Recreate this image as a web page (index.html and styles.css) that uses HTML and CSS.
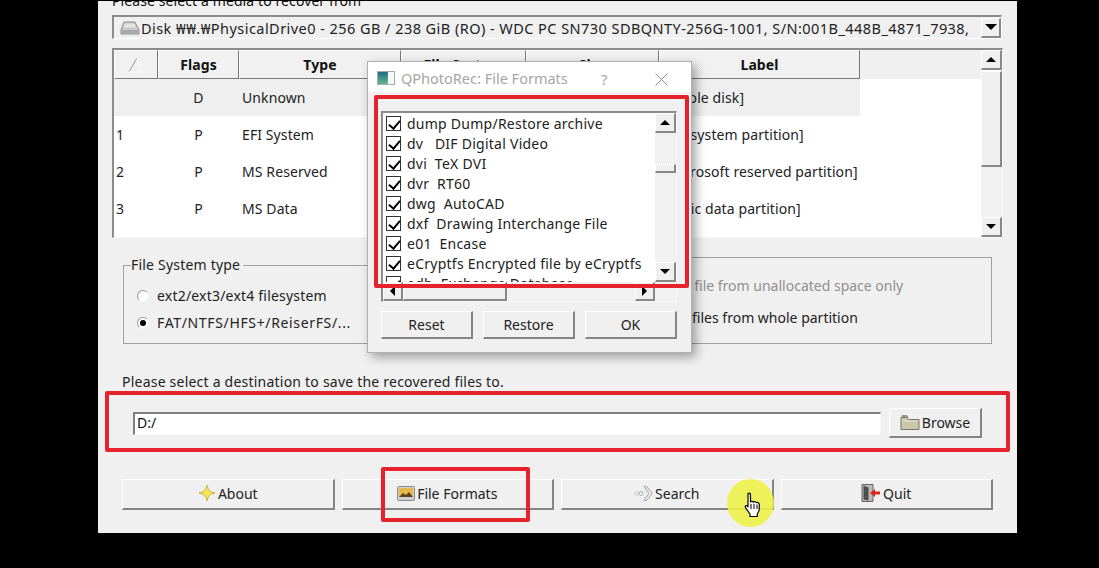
FILE: index.html
```html
<!DOCTYPE html>
<html lang="en">
<head>
<meta charset="utf-8">
<title>QPhotoRec</title>
<link rel="stylesheet" href="styles.css">
</head>
<body>
<main class="window">
  <div class="media-label">Please select a media to recover from</div>
  <div class="combo">
    <svg class="disk" width="20" height="16" viewBox="0 0 20 16"><path d="M4 2h11l4 8v4H1v-4z" fill="#c9c9c9" stroke="#8c8c8c"/><path d="M1.500 10h17v3.500h-17z" fill="#a8a8a8"/><path d="M5 3.500h9l2 4H3.500z" fill="#e4e4e4"/></svg>
    <span class="combo-text">Disk ₩₩.₩PhysicalDrive0 - 256 GB / 238 GiB (RO) - WDC PC SN730 SDBQNTY-256G-1001, S/N:001B_448B_4871_7938,</span>
    <span class="arrow-btn combo-btn"><i class="tri-down big"></i></span>
  </div>

  <div class="table">
    <div class="table-body">
      <div class="row head">
        <div class="cell c0 th"><svg width="16" height="16" viewBox="0 0 16 16"><path d="M9 1 1 15" stroke="#999" fill="none"/><path d="M9 1l6 14H1" stroke="#fff" fill="none"/></svg></div>
        <div class="cell c1 th">Flags</div>
        <div class="cell c2 th">Type</div>
        <div class="cell c3 th">File System</div>
        <div class="cell c4 th">Size</div>
        <div class="cell c5 th">Label</div>
      </div>
      <div class="row selected">
        <div class="cell c0"></div><div class="cell c1 mid">D</div><div class="cell c2">Unknown</div><div class="cell c3"></div><div class="cell c4"></div><div class="cell c5">[Whole disk]</div>
      </div>
      <div class="row">
        <div class="cell c0">1</div><div class="cell c1 mid">P</div><div class="cell c2">EFI System</div><div class="cell c3"></div><div class="cell c4"></div><div class="cell c5">[EFI system partition]</div>
      </div>
      <div class="row">
        <div class="cell c0">2</div><div class="cell c1 mid">P</div><div class="cell c2">MS Reserved</div><div class="cell c3"></div><div class="cell c4"></div><div class="cell c5">[Microsoft reserved partition]</div>
      </div>
      <div class="row">
        <div class="cell c0">3</div><div class="cell c1 mid">P</div><div class="cell c2">MS Data</div><div class="cell c3"></div><div class="cell c4"></div><div class="cell c5">[Basic data partition]</div>
      </div>
    </div>
    <div class="vscroll table-scroll">
      <span class="arrow-btn"><i class="tri-up"></i></span>
      <span class="thumb table-thumb"></span>
      <span class="trough"></span>
      <span class="arrow-btn"><i class="tri-down"></i></span>
    </div>
  </div>

  <div class="groups">
    <fieldset class="group fs-group">
      <legend>File System type</legend>
      <label class="radio-line"><i class="radio"></i>ext2/ext3/ext4 filesystem</label>
      <label class="radio-line wide"><i class="radio on"></i>FAT/NTFS/HFS+/ReiserFS/...</label>
    </fieldset>
    <div class="group scan-group">
      <div class="scan-line muted">Free: Scan for file from unallocated space only</div>
      <div class="scan-line whole">Whole: Extract files from whole partition</div>
    </div>
  </div>

  <div class="dest-label">Please select a destination to save the recovered files to.</div>
  <div class="dest-row">
    <div class="input">D:/</div>
    <button class="btn browse"><svg width="20" height="17" viewBox="0 0 20 17"><path d="M1 3.500h6l1.500 2H19V15.500H1z" fill="#c9c8ad" stroke="#77776a"/><path d="M2 1.500h5l1 2H2z" fill="#9b9a85" stroke="#77776a" stroke-width=".6"/><path d="M2 7h16" stroke="#e4e3cf"/></svg>Browse</button>
  </div>

  <div class="actions">
    <button class="btn action"><svg width="18" height="18" viewBox="0 0 18 18"><path d="M9 1c1 5 3 7 8 8-5 1-7 3-8 8-1-5-3-7-8-8 5-1 7-3 8-8z" fill="#f5e35c" stroke="#c9b23d"/></svg>About</button>
    <button class="btn action"><svg width="18" height="15" viewBox="0 0 18 15"><rect x=".5" y=".5" width="17" height="14" rx="1" fill="#cfcfcf" stroke="#8a8a8a"/><rect x="2" y="2" width="14" height="9" fill="#e8b64a"/><path d="M2 11l4-4 3 2 3-3 4 5z" fill="#5c4620"/></svg>File Formats</button>
    <button class="btn action"><svg width="19" height="17" viewBox="0 0 19 17"><circle cx="2.500" cy="8.500" r="1.800" fill="none" stroke="#c4c4c4"/><circle cx="7" cy="8.500" r="2" fill="none" stroke="#adadad"/><path d="M10 1.500h2.500l6 7-6 7H10l5-7z" fill="#eee" stroke="#a0a0a0"/></svg>Search</button>
    <button class="btn action"><svg width="20" height="18" viewBox="0 0 20 18"><path d="M1 .5h11v17H1z" fill="#b9b9b9" stroke="#666"/><path d="M2.500 1.500l5 2v13l-5-1z" fill="#4e4e4e"/><path d="M9 9l5-4v2.500h5v3h-5V13z" fill="#d8281c"/></svg>Quit</button>
  </div>
</main>

<section class="dialog">
  <header class="dialog-title">
    <span class="app-icon"></span>
    <span class="title-text">QPhotoRec: File Formats</span>
    <span class="help">?</span>
    <svg class="close" width="13" height="13" viewBox="0 0 13 13"><path d="M.5.500l12 12M12.500.500l-12 12" stroke="#8c8c8c" fill="none"/></svg>
  </header>
  <div class="dialog-body">
    <div class="list">
      <div class="list-main">
        <div class="items">
          <div class="item"><i class="check"></i>dump Dump/Restore archive</div>
          <div class="item"><i class="check"></i>dv   DIF Digital Video</div>
          <div class="item"><i class="check"></i>dvi  TeX DVI</div>
          <div class="item"><i class="check"></i>dvr  RT60</div>
          <div class="item"><i class="check"></i>dwg  AutoCAD</div>
          <div class="item"><i class="check"></i>dxf  Drawing Interchange File</div>
          <div class="item"><i class="check"></i>e01  Encase</div>
          <div class="item"><i class="check"></i>eCryptfs Encrypted file by eCryptfs</div>
          <div class="item"><i class="check"></i>edb  Exchange Database</div>
        </div>
        <div class="vscroll list-scroll">
          <span class="arrow-btn"><i class="tri-up"></i></span>
          <span class="trough short"></span>
          <span class="thumb list-thumb"></span>
          <span class="trough"></span>
          <span class="arrow-btn"><i class="tri-down"></i></span>
        </div>
      </div>
      <div class="hscroll">
        <span class="arrow-btn h"><i class="tri-left"></i></span>
        <span class="thumb h-thumb"></span>
        <span class="trough"></span>
        <span class="arrow-btn h"><i class="tri-right"></i></span>
        <span class="corner"></span>
      </div>
    </div>
    <div class="dialog-actions">
      <button class="btn dlg">Reset</button>
      <button class="btn dlg">Restore</button>
      <button class="btn dlg">OK</button>
    </div>
  </div>
</section>

<div class="mark mark-list"></div>
<div class="mark mark-dest"></div>
<div class="mark mark-formats"></div>

<div class="spot"></div>
<svg class="hand" width="18" height="26" viewBox="0 0 18 26"><path d="M4 1.500c1.200-.8 2.500 0 2.500 1.500v7c.5-1 2.500-1 3 .2.800-.8 2.500-.6 3 .5 1-.6 2.800 0 2.800 1.800v4.500c0 2-1 3.500-2 5v2.500H6V22c-1.500-2-3-4-4.500-6.500-.8-1.500.8-2.500 2-1.500l.5.800z" fill="#fff" stroke="#000" stroke-width="1.200" stroke-linejoin="round"/><path d="M7 12v5M10 12v5M13 12.500V17" stroke="#000" fill="none"/></svg>
</body>
</html>
```
FILE: styles.css
```css
* { box-sizing: border-box; }
html, body { margin: 0; height: 100%; }
body {
  background: #000;
  overflow: hidden;
  font-family: "Noto Sans", "Liberation Sans", sans-serif;
  font-size: 14px;
  color: #111;
}
.window {
  width: 919px;
  height: 532px;
  margin: 1px 0 0 98px;
  padding: 0 14px;
  background: #f0f0f0;
  overflow: hidden;
}
.media-label { height: 7px; line-height: 14px; display: flex; align-items: flex-end; white-space: nowrap; letter-spacing: .1px; }
.combo {
  margin-top: 7px;
  height: 24px;
  width: 890px;
  display: flex;
  align-items: center;
  padding-left: 6px;
  border-top: 2px solid #8c8c8c;
  border-left: 2px solid #8c8c8c;
  border-right: 1px solid #fff;
  border-bottom: 1px solid #fff;
  overflow: hidden;
}
.disk { flex: none; margin-right: 1px; }
.combo-text { flex: 1; white-space: nowrap; overflow: hidden; font-size: 14.500px; letter-spacing: .45px; color: #222; }
.combo-btn { width: 20px; height: 21px; flex: none; }
.arrow-btn {
  display: flex;
  align-items: center;
  justify-content: center;
  flex: none;
  height: 20px;
  background: #f0f0f0;
  border-top: 1px solid #fff;
  border-left: 1px solid #fff;
  border-right: 2px solid #888;
  border-bottom: 2px solid #888;
}
.arrow-btn.h { width: 20px; height: 100%; }
.tri-down, .tri-up, .tri-left, .tri-right { width: 0; height: 0; display: block; }
.tri-down { border: 5px solid transparent; border-top: 5px solid #000; border-bottom: 0; }
.tri-down.big { border-left-width: 6px; border-right-width: 6px; border-top-width: 6px; }
.tri-up { border: 5px solid transparent; border-bottom: 5px solid #000; border-top: 0; }
.tri-left { border: 5px solid transparent; border-right: 5px solid #000; border-left: 0; }
.tri-right { border: 5px solid transparent; border-left: 5px solid #000; border-right: 0; }

.table {
  margin-top: 9px;
  width: 891px;
  height: 190px;
  display: flex;
  background: #fff;
  border-top: 2px solid #8c8c8c;
  border-left: 2px solid #8c8c8c;
  border-right: 1px solid #f8f8f8;
  border-bottom: 1px solid #f8f8f8;
  overflow: hidden;
}
.table-body { flex: 1; min-width: 0; }
.row { display: flex; height: 37px; align-items: center; line-height: 37px; }
.row.head { height: 29px; background: #f0f0f0; }
.row.selected .cell { background: #efefef; }
.cell { flex: none; height: 100%; white-space: nowrap; overflow: hidden; color: #222; letter-spacing: .1px; }
.c0 { width: 44px; padding-left: 2px; }
.c1 { width: 81px; }
.c2 { width: 162px; padding-left: 3px; }
.c3 { width: 125px; }
.c4 { width: 133px; }
.c5 { width: 201px; padding-left: 3px; }
.mid { text-align: center; }
.th {
  display: flex;
  align-items: center;
  justify-content: center;
  padding: 0;
  font-weight: 700;
  line-height: 1;
  color: #111;
  background: repeating-conic-gradient(#ececec 0 25%, #f6f6f6 0 50%) 0 0 / 2px 2px;
  border-top: 1px solid #fff;
  border-left: 1px solid #fff;
  border-right: 1px solid #777;
  border-bottom: 1px solid #777;
}
.vscroll { display: flex; flex-direction: column; flex: none; }
.table-scroll { width: 21px; }
.thumb {
  display: block;
  flex: none;
  background: #f0f0f0;
  border-top: 1px solid #fff;
  border-left: 1px solid #fff;
  border-right: 2px solid #888;
  border-bottom: 2px solid #888;
}
.table-thumb { height: 96px; margin-top: 1px; }
.trough {
  display: block;
  flex: 1;
  background: repeating-conic-gradient(#e8e8e8 0 25%, #fbfbfb 0 50%) 0 0 / 2px 2px;
}

.groups { display: flex; align-items: flex-end; margin-top: 19px; padding-left: 11px; }
.group { border: 1px solid #a0a0a0; margin: 0; }
.fs-group {
  width: 430px;
  height: 87px;
  padding: 9px 0 0 13px;
  letter-spacing: .2px;
}
.fs-group legend { padding: 0 3px 0 0; margin-left: -6px; line-height: 16px; color: #222; }
.radio-line { display: flex; align-items: center; height: 27px; white-space: nowrap; color: #222; }
.radio-line.wide { letter-spacing: .65px; }
.radio {
  width: 12px;
  height: 12px;
  border-radius: 50%;
  margin-right: 8px;
  background: #fff;
  border: 1px solid #9a9a9a;
  border-right-color: #f4f4f4;
  border-bottom-color: #f4f4f4;
  display: flex;
  align-items: center;
  justify-content: center;
}
.radio.on::after { content: ""; width: 6px; height: 6px; background: #000; border-radius: 50%; }
.scan-group {
  flex: 1;
  height: 87px;
  margin-right: 11px;
  padding: 18px 0 0 47px;
}
.scan-line { height: 32px; line-height: 20px; white-space: nowrap; color: #222; }
.scan-line.whole { margin-left: -7px; }
.scan-line.muted { color: #8f8f8f; }

.dest-label { margin: 28px 0 0 10px; height: 20px; line-height: 20px; letter-spacing: .22px; white-space: nowrap; color: #222; }
.dest-row { display: flex; align-items: center; gap: 8px; margin: 16px 21px 0; height: 30px; }
.input {
  flex: 1;
  height: 23px;
  line-height: 18px;
  padding-left: 2px;
  background: #fff;
  border-top: 2px solid #7f7f7f;
  border-left: 2px solid #7f7f7f;
  border-right: 1px solid #f6f6f6;
  border-bottom: 1px solid #f6f6f6;
}
.btn {
  display: flex;
  align-items: center;
  justify-content: center;
  gap: 2px;
  font: inherit;
  color: #222;
  padding: 0;
  background: #f0f0f0;
  border-top: 1px solid #fff;
  border-left: 1px solid #fff;
  border-right: 2px solid #858585;
  border-bottom: 2px solid #858585;
}
.browse { width: 93px; height: 30px; }
.actions { display: flex; gap: 7px; margin: 41px 10px 0; }
.action { flex: 1; height: 31px; padding-bottom: 2px; }

.dialog {
  position: absolute;
  left: 367px;
  top: 61px;
  width: 325px;
  height: 292px;
  background: #f0f0f0;
  border: 1px solid #b0b0b0;
  box-shadow: 4px 4px 10px rgba(0, 0, 0, .35);
}
.dialog-title {
  height: 30px;
  padding: 2px 0 0 9px;
  background: #fff;
  display: flex;
  align-items: center;
  position: relative;
  color: #a6a6a6;
  font-size: 14.500px;
}
.app-icon {
  width: 18px;
  height: 14px;
  margin-right: 6px;
  border: 1px solid #a4adad;
  background: linear-gradient(#1f6a80, #6ab58f) 0 0 / 62% 100% no-repeat, #f4f8f6;
}
.help { position: absolute; left: 233px; top: 7px; font-size: 15px; }
.close { position: absolute; left: 287px; top: 11px; }
.dialog-body { padding: 19px 14px 0 13px; }
.list {
  height: 191px;
  background: #fff;
  border-top: 2px solid #8c8c8c;
  border-left: 2px solid #8c8c8c;
  border-right: 1px solid #f8f8f8;
  border-bottom: 1px solid #f8f8f8;
  display: flex;
  flex-direction: column;
}
.list-main { height: 169px; display: flex; overflow: hidden; }
.items { flex: 1; min-width: 0; overflow: hidden; }
.item {
  height: 20px;
  display: flex;
  align-items: center;
  white-space: pre;
  padding-left: 3px;
  letter-spacing: .25px;
  color: #222;
}
.check {
  position: relative;
  width: 15px;
  height: 15px;
  flex: none;
  margin-right: 6px;
  background: #fff;
  border: 1px solid #333;
}
.check::after {
  content: "";
  position: absolute;
  left: 4px;
  top: 1px;
  width: 5px;
  height: 9px;
  border-right: 2px solid #000;
  border-bottom: 2px solid #000;
  transform: rotate(40deg);
}
.list-scroll { width: 21px; }
.trough.short { flex: 0 0 31px; }
.list-thumb { height: 9px; }
.hscroll { height: 19px; display: flex; }
.h-thumb { width: 104px; }
.corner { width: 21px; background: repeating-conic-gradient(#e8e8e8 0 25%, #fbfbfb 0 50%) 0 0 / 2px 2px; }
.dialog-actions { display: flex; gap: 10px; margin-top: 9px; }
.dlg { flex: 1; height: 28px; }

.mark { position: absolute; border: 4px solid #e4232d; border-radius: 2px; }
.mark-list { left: 374px; top: 95px; width: 315px; height: 193px; }
.mark-dest { left: 105px; top: 391px; width: 905px; height: 61px; }
.mark-formats { left: 381px; top: 467px; width: 149px; height: 55px; }

.spot {
  position: absolute;
  left: 727px;
  top: 479px;
  width: 47px;
  height: 48px;
  border-radius: 50%;
  background: rgba(238, 240, 70, .88);
}
.hand { position: absolute; left: 744px; top: 492px; }
```
